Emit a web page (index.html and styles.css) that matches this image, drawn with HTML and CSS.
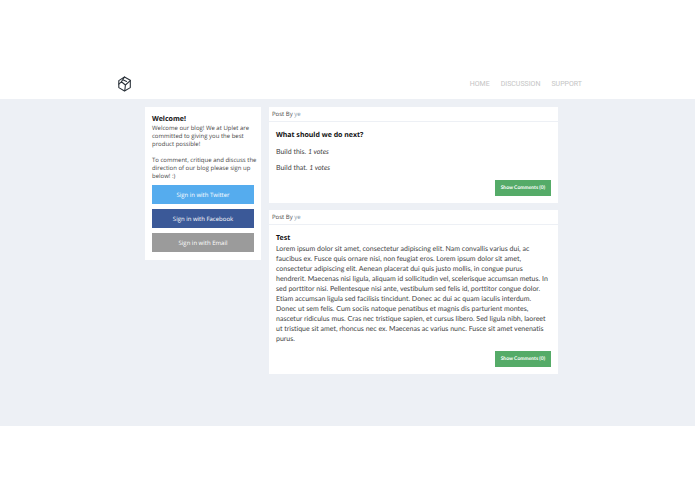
FILE: index.html
```html
<!DOCTYPE html>
<html lang="en">
<head>
<meta charset="utf-8">
<meta name="viewport" content="width=device-width, initial-scale=1">
<title>Uplet Blog</title>
<link rel="stylesheet" href="styles.css">
</head>
<body>
<header class="site-header">
  <a class="logo" href="#" aria-label="Uplet">
    <svg viewBox="0 0 14 16" width="14" height="16" fill="none" stroke="#2b323a" stroke-width="1.1" stroke-linejoin="round" stroke-linecap="round">
      <path d="M6.5 1 12.3 4.2V11.6L6.5 15 .8 11.6V4.6Z"/>
      <path d="M.8 8.2 3.4 5.8 7.4 9 12.3 4.6M3.4 5.8 6.5 1M4.8 3.8 8.6 5.4M7.4 9 6.8 14.6"/>
    </svg>
  </a>
  <nav class="nav">
    <a href="#">HOME</a>
    <a href="#">DISCUSSION</a>
    <a href="#">SUPPORT</a>
  </nav>
</header>
<div class="page">
  <div class="columns">
    <aside class="card welcome">
      <h2 class="title">Welcome!</h2>
      <p>Welcome our blog! We at Uplet are committed to giving you the best product possible!</p>
      <p>To comment, critique and discuss the direction of our blog please sign up below! :)</p>
      <div class="signin">
        <button class="twitter" type="button">Sign in with Twitter</button>
        <button class="facebook" type="button">Sign in with Facebook</button>
        <button class="email" type="button">Sign in with Email</button>
      </div>
    </aside>
    <main class="posts">
      <article class="card">
        <div class="byline">Post By <a href="#">ye</a></div>
        <div class="post-body">
          <h2 class="title">What should we do next?</h2>
          <p class="option">Build this. <em>1 votes</em></p>
          <p class="option">Build that. <em>1 votes</em></p>
          <button class="comments" type="button">Show Comments (0)</button>
        </div>
      </article>
      <article class="card">
        <div class="byline">Post By <a href="#">ye</a></div>
        <div class="post-body">
          <h2 class="title">Test</h2>
          <p class="text">Lorem ipsum dolor sit amet, consectetur adipiscing elit. Nam convallis varius dui, ac faucibus ex. Fusce quis ornare nisi, non feugiat eros. Lorem ipsum dolor sit amet, consectetur adipiscing elit. Aenean placerat dui quis justo mollis, in congue purus hendrerit. Maecenas nisi ligula, aliquam id sollicitudin vel, scelerisque accumsan metus. In sed porttitor nisi. Pellentesque nisi ante, vestibulum sed felis id, porttitor congue dolor. Etiam accumsan ligula sed facilisis tincidunt. Donec ac dui ac quam iaculis interdum. Donec ut sem felis. Cum sociis natoque penatibus et magnis dis parturient montes, nascetur ridiculus mus. Cras nec tristique sapien, et cursus libero. Sed ligula nibh, laoreet ut tristique sit amet, rhoncus nec ex. Maecenas ac varius nunc. Fusce sit amet venenatis purus.</p>
          <button class="comments" type="button">Show Comments (0)</button>
        </div>
      </article>
    </main>
  </div>
</div>
</body>
</html>
```

FILE: styles.css
```css
* { box-sizing: border-box; }
body {
  margin: 0;
  padding-top: 69px;
  background: #fff;
  color: #444;
  font: 7px/10px "Open Sans", sans-serif;
  font-variant-ligatures: none;
  text-rendering: geometricPrecision;
}
h2, p { margin: 0; }
a { text-decoration: none; }
button {
  border: 0;
  color: #fff;
  font-family: inherit;
  text-rendering: inherit;
  cursor: pointer;
}
.site-header {
  display: flex;
  align-items: center;
  justify-content: space-between;
  height: 30px;
  padding: 0 113px 0 118px;
}
.logo { display: flex; }
.nav {
  display: flex;
  gap: 11px;
  font-family: Roboto, sans-serif;
}
.nav a { color: #c4c4c4; }
.page {
  min-height: 327px;
  padding: 8px 137px 52px 145px;
  background: #edf0f5;
}
.columns {
  display: grid;
  grid-template-columns: 116px minmax(0, 1fr);
  gap: 8px;
  align-items: start;
}
.card { background: #fff; }
.title {
  color: #111;
  font-family: "Noto Sans", sans-serif;
  font-size: 7px;
  font-weight: 700;
  line-height: 10px;
}
.welcome {
  padding: 9px 3px 8px 7px;
  font-size: 6px;
  line-height: 8px;
}
.welcome .title { line-height: 8px; }
.welcome p + p { margin-top: 8px; }
.signin {
  display: grid;
  gap: 5px;
  margin: 5px 4px 0 0;
}
.signin button {
  height: 19px;
  padding: 0;
  font-size: 6px;
}
.signin .twitter { background: #55acee; }
.signin .facebook { background: #3b5998; }
.signin .email { background: #9b9b9b; }
.posts { display: grid; gap: 7px; }
.byline {
  padding: 2px 3px;
  border-bottom: 1px solid #edf0f5;
  font-size: 6px;
}
.byline a { color: #7d93a5; }
.post-body {
  display: flex;
  flex-direction: column;
  padding: 9px 7px 7px;
}
.option, .text { font-family: Lato, sans-serif; }
.option { margin-top: 6px; }
.comments {
  align-self: flex-end;
  height: 16px;
  margin-top: 7px;
  padding: 0 6px;
  background: #55ab68;
  font-family: Lato, sans-serif;
  font-size: 5px;
  font-weight: 700;
}
```
